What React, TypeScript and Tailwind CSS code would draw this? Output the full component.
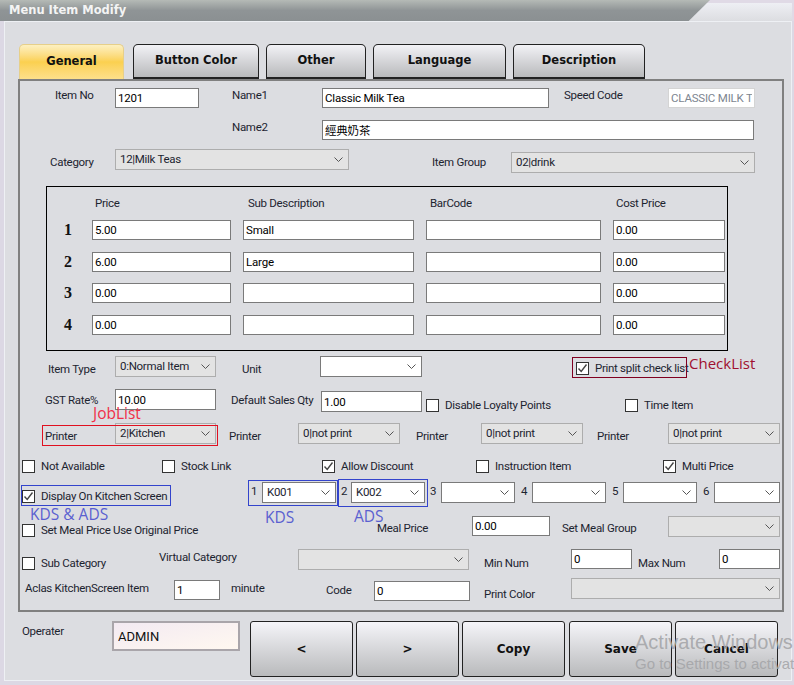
const ui = "font-['Roboto','Noto_Sans_CJK_TC',sans-serif]";

function Label({ children, className = "" }: { children?: React.ReactNode; className?: string }) {
  return <div className={`shrink-0 whitespace-nowrap text-[11.5px] leading-[14px] tracking-[-0.3px] text-[#1c2430] ${className}`}>{children}</div>;
}

function Field({ value = "", dim = false, className = "" }: { value?: string; dim?: boolean; className?: string }) {
  return (
    <input
      readOnly
      value={value}
      className={`h-5 shrink-0 border bg-white px-[2px] text-[11.5px] tracking-[-0.2px] outline-none ${dim ? "border-[#d4d4d4] text-[#7d8590]" : "border-[#7a7a7a] text-black"} ${className}`}
    />
  );
}

function Select({ value = "", white = false, className = "" }: { value?: string; white?: boolean; className?: string }) {
  return (
    <div
      className={`flex h-[21px] shrink-0 items-center justify-between border pl-[4px] pr-[5px] text-[11.5px] tracking-[-0.3px] text-[#1c2430] ${white ? "border-[#7a7a7a] bg-white" : "border-[#adadad] bg-[#e3e3e3]"} ${className}`}
    >
      <span className="whitespace-nowrap">{value}</span>
      <svg width="9" height="5" viewBox="0 0 9 5" className="shrink-0" fill="none" stroke="#555" strokeWidth="1">
        <path d="M0.5 0.5 L4.5 4.5 L8.5 0.5" />
      </svg>
    </div>
  );
}

function Check({ label, checked = false, className = "" }: { label: string; checked?: boolean; className?: string }) {
  return (
    <div className={`flex shrink-0 items-center ${className}`}>
      <div className="flex h-[13px] w-[13px] shrink-0 items-center justify-center border border-[#333] bg-white">
        {checked && (
          <svg width="11" height="11" viewBox="0 0 11 11" fill="none" stroke="#444" strokeWidth="1.4">
            <path d="M1.5 5.5 L4.2 8.5 L9.5 1.5" />
          </svg>
        )}
      </div>
      <Label className="ml-[6px]">{label}</Label>
    </div>
  );
}

function Tab({ label, active = false, className = "" }: { label: string; active?: boolean; className?: string }) {
  return (
    <div
      className={`flex h-[35px] shrink-0 items-center justify-center rounded-t-[5px] border pb-[1px] font-['DejaVu_Sans',sans-serif] text-[11.5px] font-bold text-[#111] ${active ? "border-[#e6cf8a] border-b-0 bg-gradient-to-b from-[#fdf0c0] via-[#fbd04f] to-[#fde08a]" : "border-[#222] border-b-2 bg-gradient-to-b from-[#f2f2f6] to-[#b9babc]"} ${className}`}
    >
      {label}
    </div>
  );
}

function BigButton({ label, className = "" }: { label: string; className?: string }) {
  return (
    <button className={`h-[56px] w-[103px] shrink-0 rounded-[3px] border border-[#222] bg-gradient-to-b from-[#f5f5f9] to-[#b9babc] font-['DejaVu_Sans',sans-serif] text-[12px] font-bold text-[#111] ${className}`}>
      {label}
    </button>
  );
}

const prices = [
  { no: "1", price: "5.00", sub: "Small", mt: "mt-[10px]" },
  { no: "2", price: "6.00", sub: "Large", mt: "mt-3" },
  { no: "3", price: "0.00", sub: "", mt: "mt-[11px]" },
  { no: "4", price: "0.00", sub: "", mt: "mt-3" },
];

export default function App() {
  return (
    <div className={`relative h-[685px] w-[794px] overflow-hidden bg-[#dcd8e4] ${ui}`}>
      {/* title strip */}
      <div className="h-[21px] border-r-[2px] border-t-[3px] border-[#e0dae6] bg-gradient-to-b from-[#eeeff4] to-[#dcdde1]">
        <div className="-mt-[3px] flex h-[21px] w-[710px] items-center bg-gradient-to-b from-[#b5bab6] via-[#8f9496] to-[#8b9092] pl-[9px] [clip-path:polygon(0_0,100%_0,97%_100%,0_100%)]">
          <span className="font-['DejaVu_Sans',sans-serif] text-[11.5px] font-bold text-[#f4f4f4]">Menu Item Modify</span>
        </div>
      </div>

      {/* form body */}
      <div className="ml-[4px] mr-[2px] h-[660px] border border-[#eef0f4] bg-[#dcdde1] pl-[13px]">
        {/* tabs */}
        <div className="flex h-[57px] items-end pl-px">
          <Tab label="General" active className="w-[105px]" />
          <Tab label="Button Color" className="ml-[9px] w-[126px]" />
          <Tab label="Other" className="ml-[7px] w-[100px]" />
          <Tab label="Language" className="ml-[7px] w-[133px]" />
          <Tab label="Description" className="ml-[7px] w-[132px]" />
        </div>

        {/* main panel */}
        <div className="relative h-[533px] w-[766px] border-2 border-[#808080] pt-[7px]">
          <div className="flex h-8 items-start pl-[35px]">
            <Label className="w-[60px]">Item No</Label>
            <Field value="1201" className="w-[84px]" />
            <Label className="ml-[33px] w-[90px]">Name1</Label>
            <Field value="Classic Milk Tea" className="w-[227px]" />
            <Label className="ml-[15px] w-[104px]">Speed Code</Label>
            <Field value="CLASSIC MILK TEA" dim className="w-[87px]" />
          </div>
          <div className="flex h-[29px] items-start pl-[212px]">
            <Label className="w-[90px]">Name2</Label>
            <Field value="經典奶茶" className="w-[432px]" />
          </div>
          <div className="flex h-[37px] items-start pl-[30px]">
            <Label className="mt-[6px] w-[65px]">Category</Label>
            <Select value="12|Milk Teas" className="w-[234px]" />
            <Label className="ml-[83px] mt-[6px] w-[79px]">Item Group</Label>
            <Select value="02|drink" className="mt-[3px] w-[244px]" />
          </div>

          {/* price table */}
          <div className="ml-[26px] h-[165px] w-[682px] border border-black pl-px pt-[9px]">
            <div className="flex pl-[47px]">
              <Label className="w-[153px]">Price</Label>
              <Label className="w-[182px]">Sub Description</Label>
              <Label className="w-[186px]">BarCode</Label>
              <Label>Cost Price</Label>
            </div>
            {prices.map((row) => (
              <div key={row.no} className={`flex h-5 items-center ${row.mt}`}>
                <div className="w-11 shrink-0 pl-4 font-['Liberation_Serif',serif] text-[16px] font-bold leading-5 text-[#111]">{row.no}</div>
                <Field value={row.price} className="w-[139px]" />
                <Field value={row.sub} className="ml-3 w-[171px]" />
                <Field className="ml-3 w-[175px]" />
                <Field value="0.00" className="ml-3 w-[112px]" />
              </div>
            ))}
          </div>

          <div className="mt-[5px] flex h-[33px] items-start pl-7">
            <Label className="mt-[6px] w-[67px]">Item Type</Label>
            <Select value="0:Normal Item" className="w-[101px]" />
            <Label className="ml-[26px] mt-[6px] w-[78px]">Unit</Label>
            <Select white className="w-[102px]" />
            <Check label="Print split check list" checked className="ml-[154px] mt-[5px]" />
          </div>
          <div className="flex h-[34px] items-start pl-[25px]">
            <Label className="mt-1 w-[70px]">GST Rate%</Label>
            <Field value="10.00" className="h-[21px] w-[101px]" />
            <Label className="ml-[15px] mt-1 w-[90px]">Default Sales Qty</Label>
            <Field value="1.00" className="mt-[2px] h-[21px] w-[101px]" />
            <Check label="Disable Loyalty Points" className="ml-1 mt-[9px] w-[199px]" />
            <Check label="Time Item" className="mt-[9px]" />
          </div>
          <div className="flex h-9 items-start pl-[25px]">
            <Label className="mt-[6px] w-[70px]">Printer</Label>
            <Select value="2|Kitchen" className="w-[101px]" />
            <Label className="ml-[13px] mt-[6px] w-[69px]">Printer</Label>
            <Select value="0|not print" className="w-[102px]" />
            <Label className="ml-4 mt-[6px] w-[65px]">Printer</Label>
            <Select value="0|not print" className="w-[102px]" />
            <Label className="ml-[14px] mt-[6px] w-[71px]">Printer</Label>
            <Select value="0|not print" className="w-[112px]" />
          </div>
          <div className="flex h-[21px] items-start pl-[2px]">
            <Check label="Not Available" className="w-[140px]" />
            <Check label="Stock Link" className="w-[160px]" />
            <Check label="Allow Discount" checked className="w-[154px]" />
            <Check label="Instruction Item" className="w-[187px]" />
            <Check label="Multi Price" checked />
          </div>
          <div className="flex h-9 items-start pl-[2px]">
            <Check label="Display On Kitchen Screen" checked className="mt-[9px] w-[229px]" />
            <Label className="mt-1 w-[11px]">1</Label>
            <Select white value="K001" className="mt-[2px] w-[74px]" />
            <Label className="ml-[5px] mt-1 w-[10px]">2</Label>
            <Select white value="K002" className="mt-[2px] w-[74px]" />
            <Label className="ml-[5px] mt-1 w-[11px]">3</Label>
            <Select white className="mt-[2px] w-[74px]" />
            <Label className="ml-[6px] mt-1 w-[11px]">4</Label>
            <Select white className="mt-[2px] w-[74px]" />
            <Label className="ml-[6px] mt-1 w-[11px]">5</Label>
            <Select white className="mt-[2px] w-[74px]" />
            <Label className="ml-[6px] mt-1 w-[11px]">6</Label>
            <Select white className="mt-[2px] w-[66px]" />
          </div>
          <div className="flex h-[33px] items-start pl-[2px]">
            <Check label="Set Meal Price Use Original Price" className="mt-[7px] w-[355px]" />
            <Label className="mt-[5px] w-[95px]">Meal Price</Label>
            <Field value="0.00" className="w-[78px]" />
            <Label className="ml-3 mt-[5px] w-[106px]">Set Meal Group</Label>
            <Select className="w-[112px]" />
          </div>
          <div className="flex h-[29px] items-start pl-[2px]">
            <Check label="Sub Category" className="mt-[7px] w-[137px]" />
            <Label className="mt-px w-[139px]">Virtual Category</Label>
            <Select className="w-[171px]" />
            <Label className="ml-[15px] mt-[7px] w-[87px]">Min Num</Label>
            <Field value="0" className="w-[61px]" />
            <Label className="ml-[6px] mt-[7px] w-[81px]">Max Num</Label>
            <Field value="0" className="w-[61px]" />
          </div>
          <div className="flex h-8 items-start pl-[5px]">
            <Label className="mt-[3px] w-[149px]">Aclas KitchenScreen Item</Label>
            <Field value="1" className="mt-[2px] w-[46px]" />
            <Label className="ml-[11px] mt-[3px] w-[95px]">minute</Label>
            <Label className="mt-[5px] w-[48px]">Code</Label>
            <Field value="0" className="mt-[3px] w-[96px]" />
            <Label className="ml-[14px] mt-[9px] w-[87px]">Print Color</Label>
            <Select className="w-[209px]" />
          </div>

          {/* hand-drawn annotations on the screenshot */}
          <div className="absolute left-[22px] top-[344px] h-[21px] w-[176px] border border-[#e01020]" />
          <div className="absolute left-[552px] top-[276px] h-[21px] w-[115px] border border-[#800020]" />
          <div className="absolute left-px top-[404px] h-[21px] w-[150px] border border-[#3344cc]" />
          <div className="absolute left-[228px] top-[399px] h-[26px] w-[90px] border border-[#3344cc]" />
          <div className="absolute left-[318px] top-[398px] h-[28px] w-[90px] border border-[#3344cc]" />
          <span className="absolute left-[73px] top-[323px] font-['Open_Sans',sans-serif] text-[15.5px] leading-[18px] text-[#f03048]">JobList</span>
          <span className="absolute left-[669px] top-[273px] font-['Open_Sans',sans-serif] text-[15px] leading-[18px] text-[#a01030]">CheckList</span>
          <span className="absolute left-[10px] top-[426px] font-['Open_Sans',sans-serif] text-[15.5px] leading-[14px] text-[#5a60d0]">KDS &amp; ADS</span>
          <span className="absolute left-[245px] top-[427px] font-['Open_Sans',sans-serif] text-[15.5px] leading-[18px] text-[#5a60d0]">KDS</span>
          <span className="absolute left-[334px] top-[426px] font-['Open_Sans',sans-serif] text-[15.5px] leading-[18px] text-[#5a60d0]">ADS</span>
        </div>

        {/* footer */}
        <div className="mt-[9px] flex items-start pl-1">
          <Label className="mt-[3px] w-[90px]">Operater</Label>
          <input
            readOnly
            value="ADMIN"
            className="h-[30px] w-[128px] shrink-0 border-2 border-[#a9a5aa] bg-gradient-to-br from-[#f3eaf2] to-[#fff8f0] px-1 text-[13px] text-[#111] outline-none"
          />
          <BigButton label="<" className="ml-[10px]" />
          <BigButton label=">" className="ml-[3px]" />
          <BigButton label="Copy" className="ml-[3px]" />
          <BigButton label="Save" className="ml-1" />
          <BigButton label="Cancel" className="ml-[3px]" />
        </div>
      </div>

      {/* windows watermark */}
      <div className="pointer-events-none absolute left-[635px] top-[629px] whitespace-nowrap font-['Liberation_Sans',sans-serif] text-[#a4a5a8]/90">
        <div className="text-[20px] leading-[26px]">Activate Windows</div>
        <div className="text-[15px] leading-[18px]">Go to Settings to activate</div>
      </div>
    </div>
  );
}
